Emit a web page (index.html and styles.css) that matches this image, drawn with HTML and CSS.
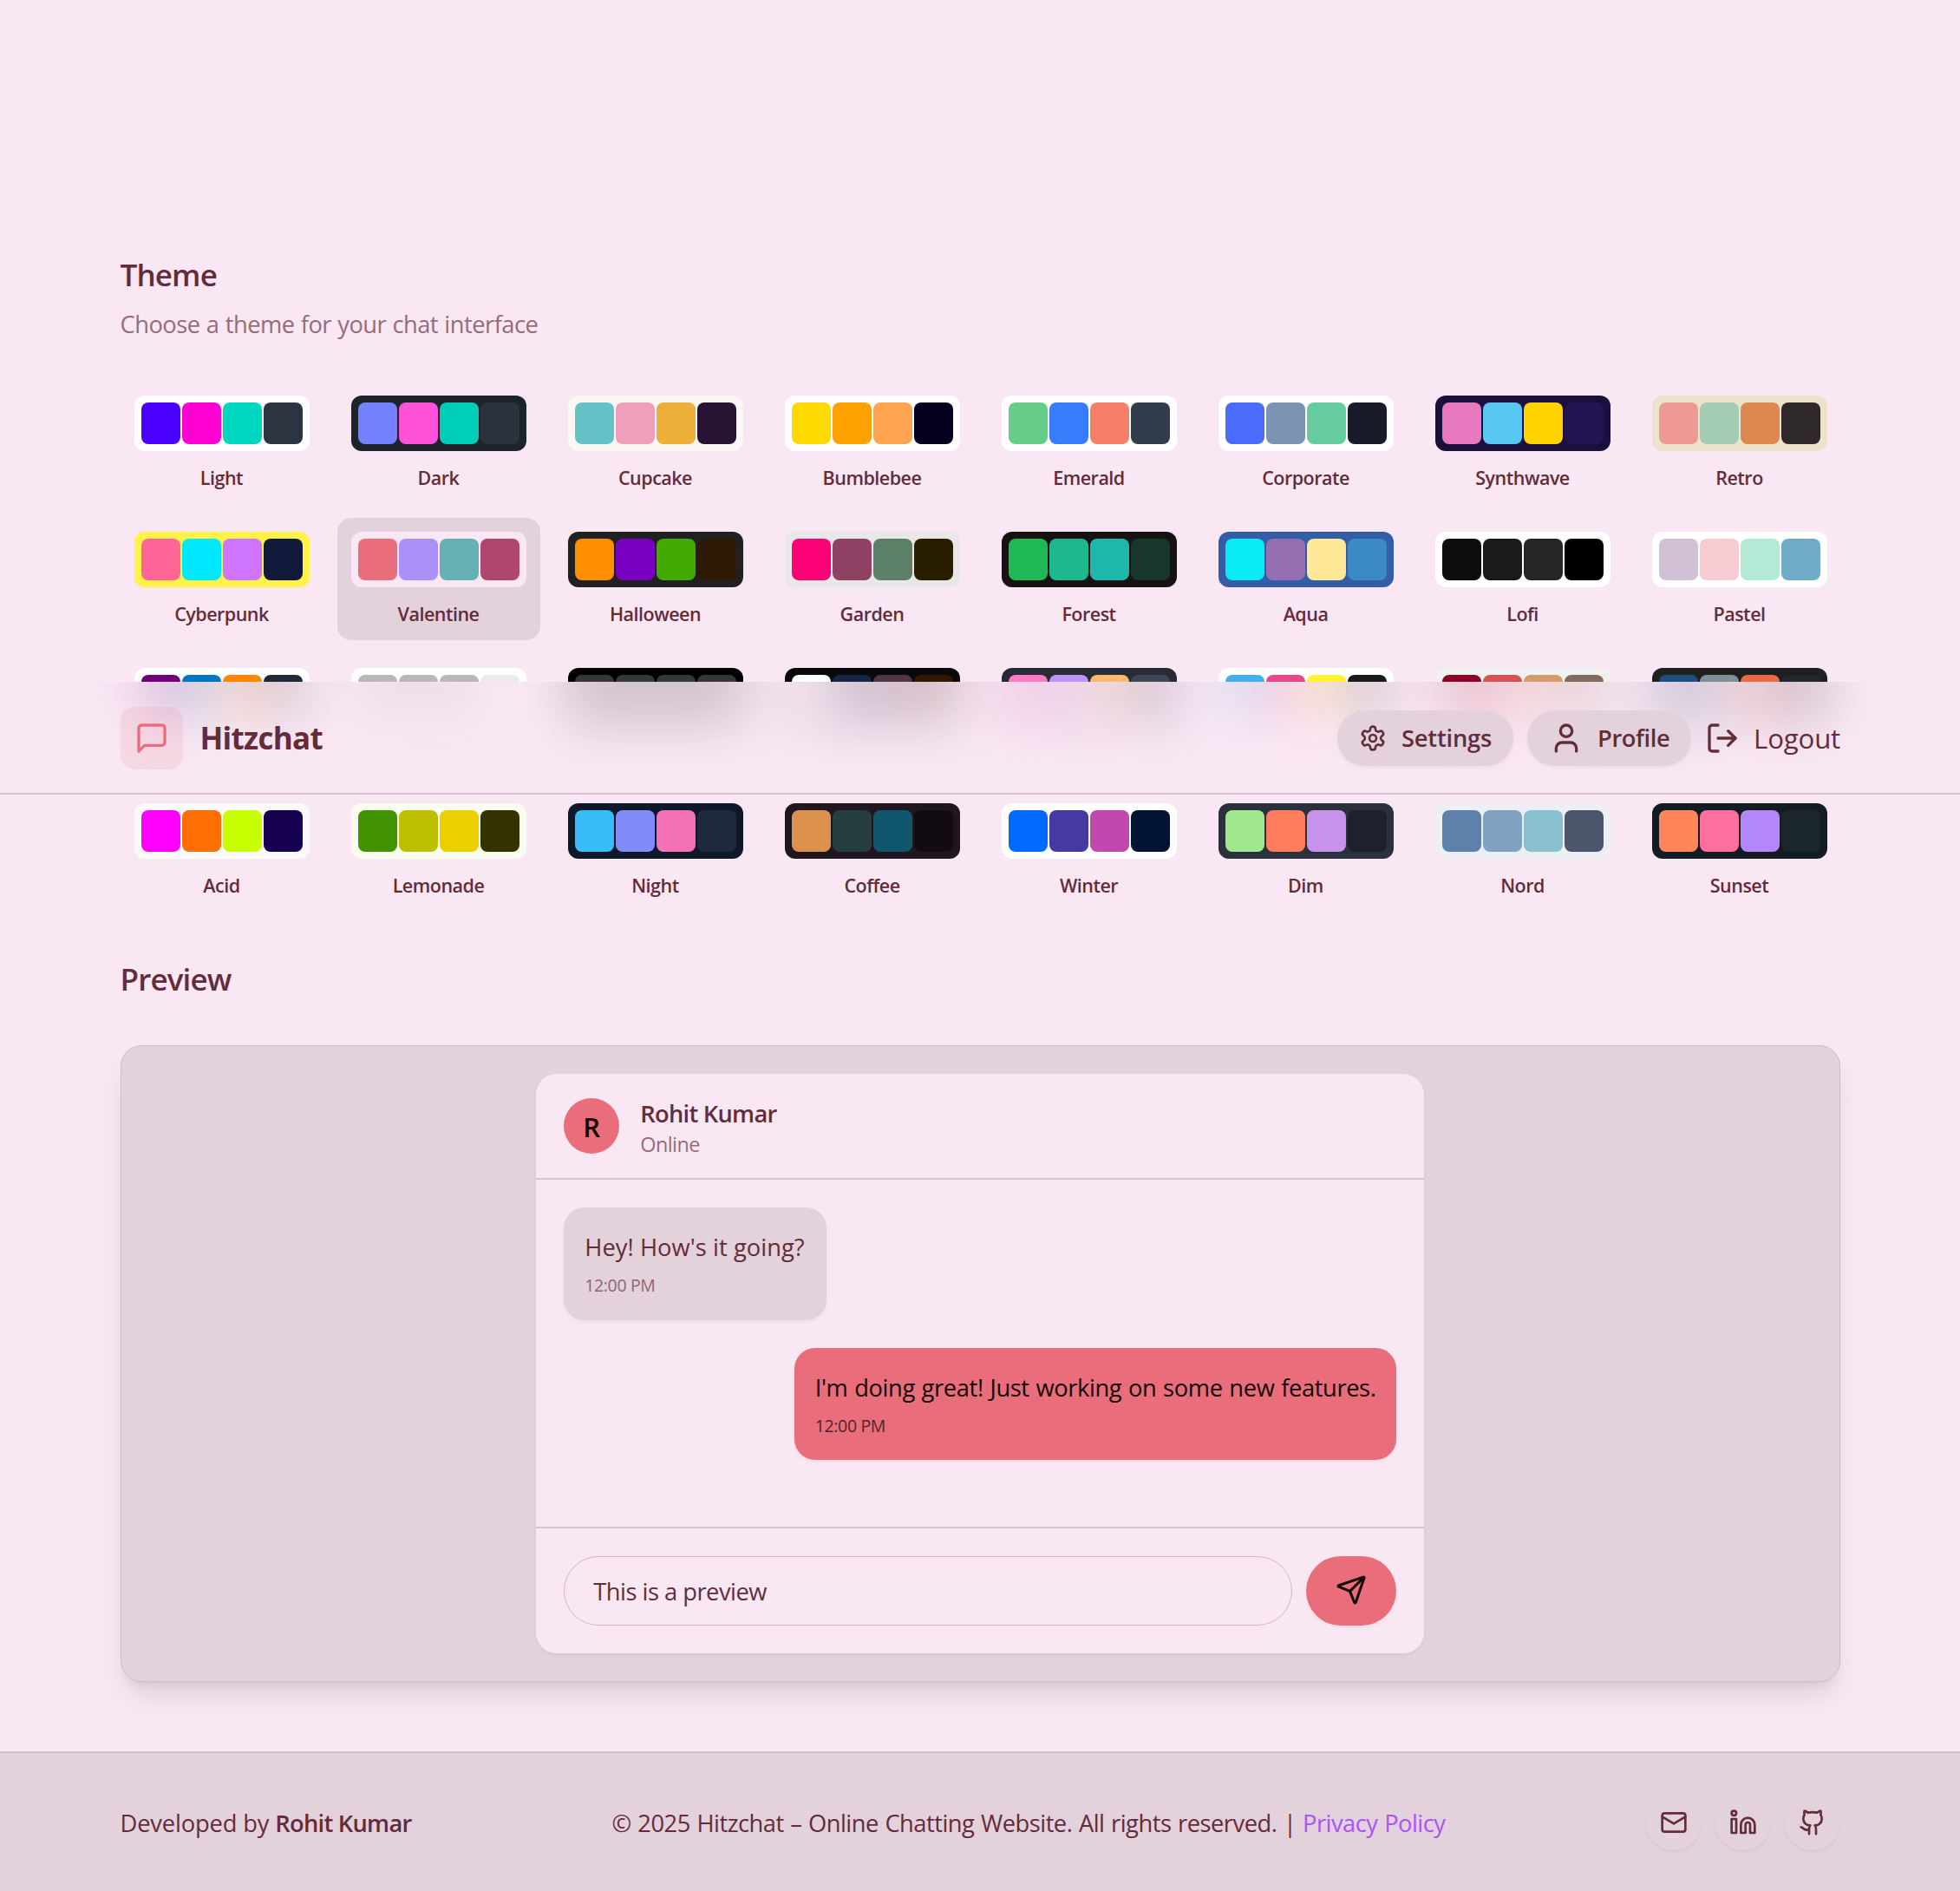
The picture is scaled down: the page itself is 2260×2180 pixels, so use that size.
FILE: index.html
```html
<!DOCTYPE html>
<html lang="en">
<head>
<meta charset="utf-8">
<title>Hitzchat</title>
<link rel="stylesheet" href="styles.css">
</head>
<body>
<header class="nav">
  <div class="nav-glass" aria-hidden="true"><div class="nav-glow" id="glow"></div></div>
  <div class="nav-inner">
    <a class="brand">
      <span class="brand-mark"><svg class="icon icon-lg" viewBox="0 0 24 24"><path d="M21 15a2 2 0 0 1-2 2H7l-4 4V5a2 2 0 0 1 2-2h14a2 2 0 0 1 2 2z"/></svg></span>
      <span class="brand-name">Hitzchat</span>
    </a>
    <nav class="nav-actions">
      <a class="pill pill-settings"><svg class="icon icon-md" viewBox="0 0 24 24"><path d="M12.22 2h-.44a2 2 0 0 0-2 2v.18a2 2 0 0 1-1 1.73l-.43.25a2 2 0 0 1-2 0l-.15-.08a2 2 0 0 0-2.73.73l-.22.38a2 2 0 0 0 .73 2.73l.15.1a2 2 0 0 1 1 1.72v.51a2 2 0 0 1-1 1.74l-.15.09a2 2 0 0 0-.73 2.73l.22.38a2 2 0 0 0 2.73.73l.15-.08a2 2 0 0 1 2 0l.43.25a2 2 0 0 1 1 1.73V20a2 2 0 0 0 2 2h.44a2 2 0 0 0 2-2v-.18a2 2 0 0 1 1-1.73l.43-.25a2 2 0 0 1 2 0l.15.08a2 2 0 0 0 2.73-.73l.22-.39a2 2 0 0 0-.73-2.73l-.15-.08a2 2 0 0 1-1-1.74v-.5a2 2 0 0 1 1-1.74l.15-.09a2 2 0 0 0 .73-2.73l-.22-.38a2 2 0 0 0-2.73-.73l-.15.08a2 2 0 0 1-2 0l-.43-.25a2 2 0 0 1-1-1.73V4a2 2 0 0 0-2-2z"/><circle cx="12" cy="12" r="3"/></svg><span>Settings</span></a>
      <a class="pill pill-profile"><svg class="icon icon-lg" viewBox="0 0 24 24"><path d="M19 21v-2a4 4 0 0 0-4-4H9a4 4 0 0 0-4 4v2"/><circle cx="12" cy="7" r="4"/></svg><span>Profile</span></a>
      <a class="logout"><svg class="icon icon-lg" viewBox="0 0 24 24"><path d="M9 21H5a2 2 0 0 1-2-2V5a2 2 0 0 1 2-2h4"/><path d="m16 17 5-5-5-5"/><path d="M21 12H9"/></svg><span>Logout</span></a>
    </nav>
  </div>
</header>
<main class="page">
  <section class="intro">
    <h2 class="heading">Theme</h2>
    <p class="subtitle">Choose a theme for your chat interface</p>
  </section>
  <div class="themes" id="themes"></div>
  <h2 class="heading preview-heading">Preview</h2>
  <section class="preview">
    <div class="chat">
      <div class="chat-head">
        <div class="avatar">R</div>
        <div class="who"><div class="name">Rohit Kumar</div><div class="status">Online</div></div>
      </div>
      <div class="messages">
        <div class="bubble received"><p>Hey! How's it going?</p><time>12:00 PM</time></div>
        <div class="bubble sent"><p>I'm doing great! Just working on some new features.</p><time>12:00 PM</time></div>
      </div>
      <div class="composer">
        <div class="field">This is a preview</div>
        <button class="send" aria-label="Send"><svg class="icon icon-send" viewBox="0 0 24 24"><path d="M14.536 21.686a.5.5 0 0 0 .937-.024l6.5-19a.496.496 0 0 0-.635-.635l-19 6.5a.5.5 0 0 0-.024.937l7.93 3.18a2 2 0 0 1 1.112 1.11z"/><path d="m21.854 2.147-10.94 10.939"/></svg></button>
      </div>
    </div>
  </section>
</main>
<footer class="footer">
  <div class="footer-inner">
    <p class="credit">Developed by <strong>Rohit Kumar</strong></p>
    <p class="legal">© 2025 Hitzchat – Online Chatting Website. All rights reserved. | <a class="privacy">Privacy Policy</a></p>
    <div class="social">
      <a><svg class="icon icon-md" viewBox="0 0 24 24"><rect x="2" y="4" width="20" height="16" rx="2"/><path d="M22 7l-10 6L2 7"/></svg></a>
      <a><svg class="icon icon-md" viewBox="0 0 24 24"><path d="M16 8a6 6 0 0 1 6 6v7h-4v-7a2 2 0 0 0-4 0v7h-4v-7a6 6 0 0 1 6-6z"/><rect x="2" y="9" width="4" height="12"/><circle cx="4" cy="4" r="2"/></svg></a>
      <a><svg class="icon icon-md" viewBox="0 0 24 24"><path d="M15 22v-4a4.800 4.800 0 0 0-1-3.500c3 0 6-2 6-5.500.08-1.250-.27-2.480-1-3.500.28-1.150.28-2.350 0-3.500 0 0-1 0-3 1.500-2.640-.5-5.360-.5-8 0C6 2 5 2 5 2c-.3 1.150-.3 2.350 0 3.500A5.403 5.403 0 0 0 4 9c0 3.500 3 5.500 6 5.500-.39.490-.68 1.050-.85 1.650-.17.600-.22 1.230-.15 1.850v4"/><path d="M9 18c-4.510 2-5-2-7-2"/></svg></a>
    </div>
  </div>
</footer>
<script src="themes.js"></script>
</body>
</html>
```
FILE: themes.js
```js
// name, base colour, then primary, secondary, accent and neutral
const themes = [
  ["Light", "#fff", "#4a00ff", "#ff00d3", "#00d7c0", "#2b3440"],
  ["Dark", "#1d232a", "#7480ff", "#ff52d9", "#00cdb7", "#2a323c"],
  ["Cupcake", "#faf7f5", "#65c3c8", "#ef9fbc", "#eeaf3a", "#291334"],
  ["Bumblebee", "#fff", "#ffd900", "#ffa200", "#ffa552", "#05001f"],
  ["Emerald", "#fff", "#66cc8a", "#377cfb", "#f68067", "#333c4d"],
  ["Corporate", "#fff", "#4b6bfb", "#7b92b2", "#67cba0", "#181a2a"],
  ["Synthwave", "#1a103d", "#e779c1", "#58c7f3", "#ffd200", "#221551"],
  ["Retro", "#ece3ca", "#ef9995", "#a4cbb4", "#dc8850", "#2e282a"],
  ["Cyberpunk", "#fff248", "#ff6596", "#00e8ff", "#ce74ff", "#111a3b"],
  ["Valentine", "#f9e7f3", "#e96d7b", "#a991f7", "#66b1b3", "#af4670"],
  ["Halloween", "#212121", "#ff8f00", "#7a00c2", "#42aa00", "#2f1b05"],
  ["Garden", "#e9e7e7", "#fe0075", "#8e4162", "#5c7f67", "#291e00"],
  ["Forest", "#171212", "#1eb854", "#1db88e", "#1db8ab", "#19362d"],
  ["Aqua", "#345da7", "#09ecf3", "#966fb3", "#ffe999", "#3b8ac4"],
  ["Lofi", "#fff", "#0d0d0d", "#1a1a1a", "#262626", "#000"],
  ["Pastel", "#fff", "#d1c1d7", "#f6cbd1", "#b4e9d6", "#70acc7"],
  ["Fantasy", "#fff", "#6d0076", "#0075c2", "#ff8600", "#1f2937"],
  ["Wireframe", "#fff", "#b8b8b8", "#b8b8b8", "#b8b8b8", "#ebebeb"],
  ["Black", "#000", "#373737", "#373737", "#373737", "#373737"],
  ["Luxury", "#09090b", "#fff", "#152747", "#513448", "#331800"],
  ["Dracula", "#282a36", "#ff79c6", "#bd93f9", "#ffb86c", "#414558"],
  ["Cmyk", "#fff", "#45aeee", "#e8488a", "#fff232", "#1a1a1a"],
  ["Autumn", "#f1f1f1", "#8c0327", "#d85251", "#d59b6a", "#826a5c"],
  ["Business", "#202020", "#1c4e80", "#7c909a", "#ea6947", "#23282f"],
  ["Acid", "#fafafa", "#ff00ff", "#ff6e00", "#c8ff00", "#150050"],
  ["Lemonade", "#f8fdef", "#419400", "#bdc000", "#ebd000", "#343300"],
  ["Night", "#0f172a", "#38bdf8", "#818cf8", "#f471b5", "#1e293b"],
  ["Coffee", "#20161f", "#db924c", "#263e3f", "#10576d", "#120c12"],
  ["Winter", "#fff", "#0069ff", "#463aa2", "#c148ac", "#021431"],
  ["Dim", "#2a303c", "#9fe88d", "#ff7d5c", "#c792e9", "#1c212b"],
  ["Nord", "#eceff4", "#5e81ac", "#81a1c1", "#88c0d0", "#4c566a"],
  ["Sunset", "#121c22", "#ff865b", "#fd6f9c", "#b387fa", "#1b262c"],
];

const swatch = ([, base, ...colors]) =>
  `<div class="swatch" style="background:${base}">${colors
    .map((c) => `<i style="background:${c}"></i>`)
    .join("")}</div>`;

document.getElementById("themes").innerHTML = themes
  .map((t) => `
    <button class="theme${t[0] === "Valentine" ? " active" : ""}">
      ${swatch(t)}
      <span>${t[0]}</span>
    </button>`)
  .join("");

document.getElementById("glow").innerHTML = themes.slice(16, 24).map(swatch).join("");
```
FILE: styles.css
```css
:root {
  --base-100: #f9e7f3;
  --base-200: #e3d1dc;
  --line: #cebdca;
  --rule: #d2c3ce;
  --text: #632c3b;
  --muted: #966c7a;
  --primary: #e96d7b;
}
* { box-sizing: border-box; }
body {
  margin: 0;
  width: 2260px;
  height: 2180px;
  overflow: hidden;
  background: var(--base-100);
  color: var(--text);
  font: 27.3px/40px "Open Sans", "Noto Sans", sans-serif;
  display: flex;
  flex-direction: column;
}
h2, p { margin: 0; }
button { font: inherit; color: inherit; border: 0; padding: 0; background: none; }
.icon { display: block; fill: none; stroke: currentColor; stroke-width: 2; stroke-linecap: round; stroke-linejoin: round; flex: none; }
.icon-md { width: 32px; height: 32px; }
.icon-lg { width: 40px; height: 40px; }
.icon-send { width: 36px; height: 36px; margin-bottom: 2px; }

/* The bar floats over the scrolled page */
.nav {
  position: absolute;
  z-index: 2;
  top: 786px;
  left: 0;
  width: 2260px;
  height: 130px;
  border-bottom: 2px solid #d0c1cc;
  background: var(--base-100);
}
.nav-glass { position: absolute; inset: 0; overflow: hidden; }
.nav-glow { position: absolute; left: 138.500px; right: 138px; top: -46px; height: 92px; display: grid; grid-template-columns: repeat(8, 1fr); gap: 16px; filter: blur(29px); opacity: .2; }
.nav-glow .swatch { margin: 0 auto; height: 92px; }
.nav-inner { position: relative; height: 128px; margin: 0 138px 0 138.500px; display: flex; align-items: center; justify-content: space-between; padding-top: 1px; }
.brand { display: flex; align-items: center; gap: 20px; }
.brand-mark { width: 72px; height: 72px; border-radius: 16px; display: grid; place-items: center; background: rgba(233, 109, 123, .12); color: var(--primary); }
.brand-name { font-size: 35px; font-weight: 700; letter-spacing: -.7px; padding-top: 1px; }
.nav-actions { display: flex; align-items: center; gap: 16px; }
.pill { height: 64px; display: flex; align-items: center; gap: 16px; padding-left: 25px; border-radius: 32px; background: var(--base-200); box-shadow: 0 2px 4px rgba(0, 0, 0, .05); font-weight: 600; letter-spacing: -.2px; }
.pill span, .logout span { padding-top: 1px; }
.pill-settings { width: 203px; gap: 17px; }
.pill-profile { width: 189px; letter-spacing: -.4px; }
.logout { display: flex; align-items: center; gap: 16px; font-size: 31.2px; letter-spacing: -.15px; width: 156px; white-space: nowrap; }

.page { flex: none; height: 2019px; padding: 293px 138px 0 138.500px; }
.heading { font-size: 35px; line-height: 48px; font-weight: 600; letter-spacing: -.85px; }
.subtitle { color: var(--muted); margin-top: 13px; letter-spacing: -.5px; word-spacing: .6px; }
.themes { display: grid; grid-template-columns: repeat(8, 1fr); gap: 16px; margin-top: 46px; }
.theme { height: 140.800px; padding: 16px 16px 0; display: flex; flex-direction: column; justify-content: flex-start; align-items: center; gap: 15px; border-radius: 16px; }
.theme.active { background: var(--base-200); }
.theme span { font-size: 21.5px; line-height: 32px; font-weight: 600; letter-spacing: -.5px; }
/* covered by the bar */
.theme:nth-child(n+17):nth-child(-n+24) span { visibility: hidden; }
.swatch { flex: none; width: 202px; height: 64px; border-radius: 12px; padding: 8px; display: grid; grid-template-columns: repeat(4, 1fr); gap: 2px; }
.swatch i { border-radius: 8px; }

.preview-heading { margin-top: 54px; }
.preview { margin-top: 52px; height: 734px; padding: 32px; border: 1px solid var(--line); border-radius: 24px; background: var(--base-200); box-shadow: 0 20px 30px -6px rgba(0, 0, 0, .1), 0 8px 12px -8px rgba(0, 0, 0, .1); }
.chat { width: 1024px; height: 668px; margin: 0 auto; border-radius: 24px; background: var(--base-100); box-shadow: 0 2px 4px rgba(0, 0, 0, .05); display: flex; flex-direction: column; }
.chat-head { height: 122px; border-bottom: 2px solid var(--rule); padding: 0 32px; display: flex; align-items: center; gap: 24px; }
.avatar { width: 64px; height: 64px; border-radius: 50%; background: var(--primary); color: #130405; font-size: 31px; font-weight: 600; display: grid; place-items: center; padding-top: 1px; }
.who { padding-top: 5px; }
.name { font-weight: 600; line-height: 36px; letter-spacing: -.73px; }
.status { color: var(--muted); font-size: 23.4px; line-height: 34px; letter-spacing: -.55px; }
.messages { flex: 1; padding: 32px 32px 0; display: flex; flex-direction: column; gap: 32px; align-items: flex-start; }
.bubble { height: 129.500px; padding: 26px 24px 0; border-radius: 24px; box-shadow: 0 2px 4px rgba(0, 0, 0, .05); white-space: nowrap; }
.bubble p { width: max-content; }
.bubble time { display: block; width: max-content; font-size: 19.5px; line-height: 30px; margin-top: 9px; letter-spacing: -.35px; }
.received { background: var(--base-200); width: 302.500px; }
.received p { letter-spacing: .05px; }
.received time { color: #8e6773; }
.sent { align-self: flex-end; background: var(--primary); color: #130405; width: 694.500px; }
.sent p { letter-spacing: -.38px; word-spacing: 1px; }
.sent time { color: #53232a; }
.composer { height: 146px; border-top: 2px solid var(--rule); padding: 32px; display: flex; gap: 16px; }
.field { flex: 1; height: 80px; border: 1px solid #d3b9c7; border-radius: 40px; padding: 0 33px; line-height: 79px; letter-spacing: -.5px; }
.send { width: 104px; height: 80px; border-radius: 40px; background: var(--primary); color: #130405; display: grid; place-items: center; box-shadow: 0 2px 4px rgba(0, 0, 0, .05); }

.footer { flex: 1; border-top: 2px solid #d0c0cc; background: var(--base-200); }
.footer-inner { margin: 0 138.500px; padding-top: 48px; display: flex; align-items: center; justify-content: space-between; }
.footer p { padding-top: 2px; }
.credit { letter-spacing: -.15px; }
.footer strong { font-weight: 600; letter-spacing: -.73px; }
.legal { letter-spacing: -.5px; word-spacing: 1px; }
.privacy { color: #a855f7; }
.social { display: flex; gap: 16px; }
.social a { width: 64px; height: 64px; border-radius: 50%; display: grid; place-items: center; box-shadow: 0 2px 4px rgba(0, 0, 0, .05); }
```
